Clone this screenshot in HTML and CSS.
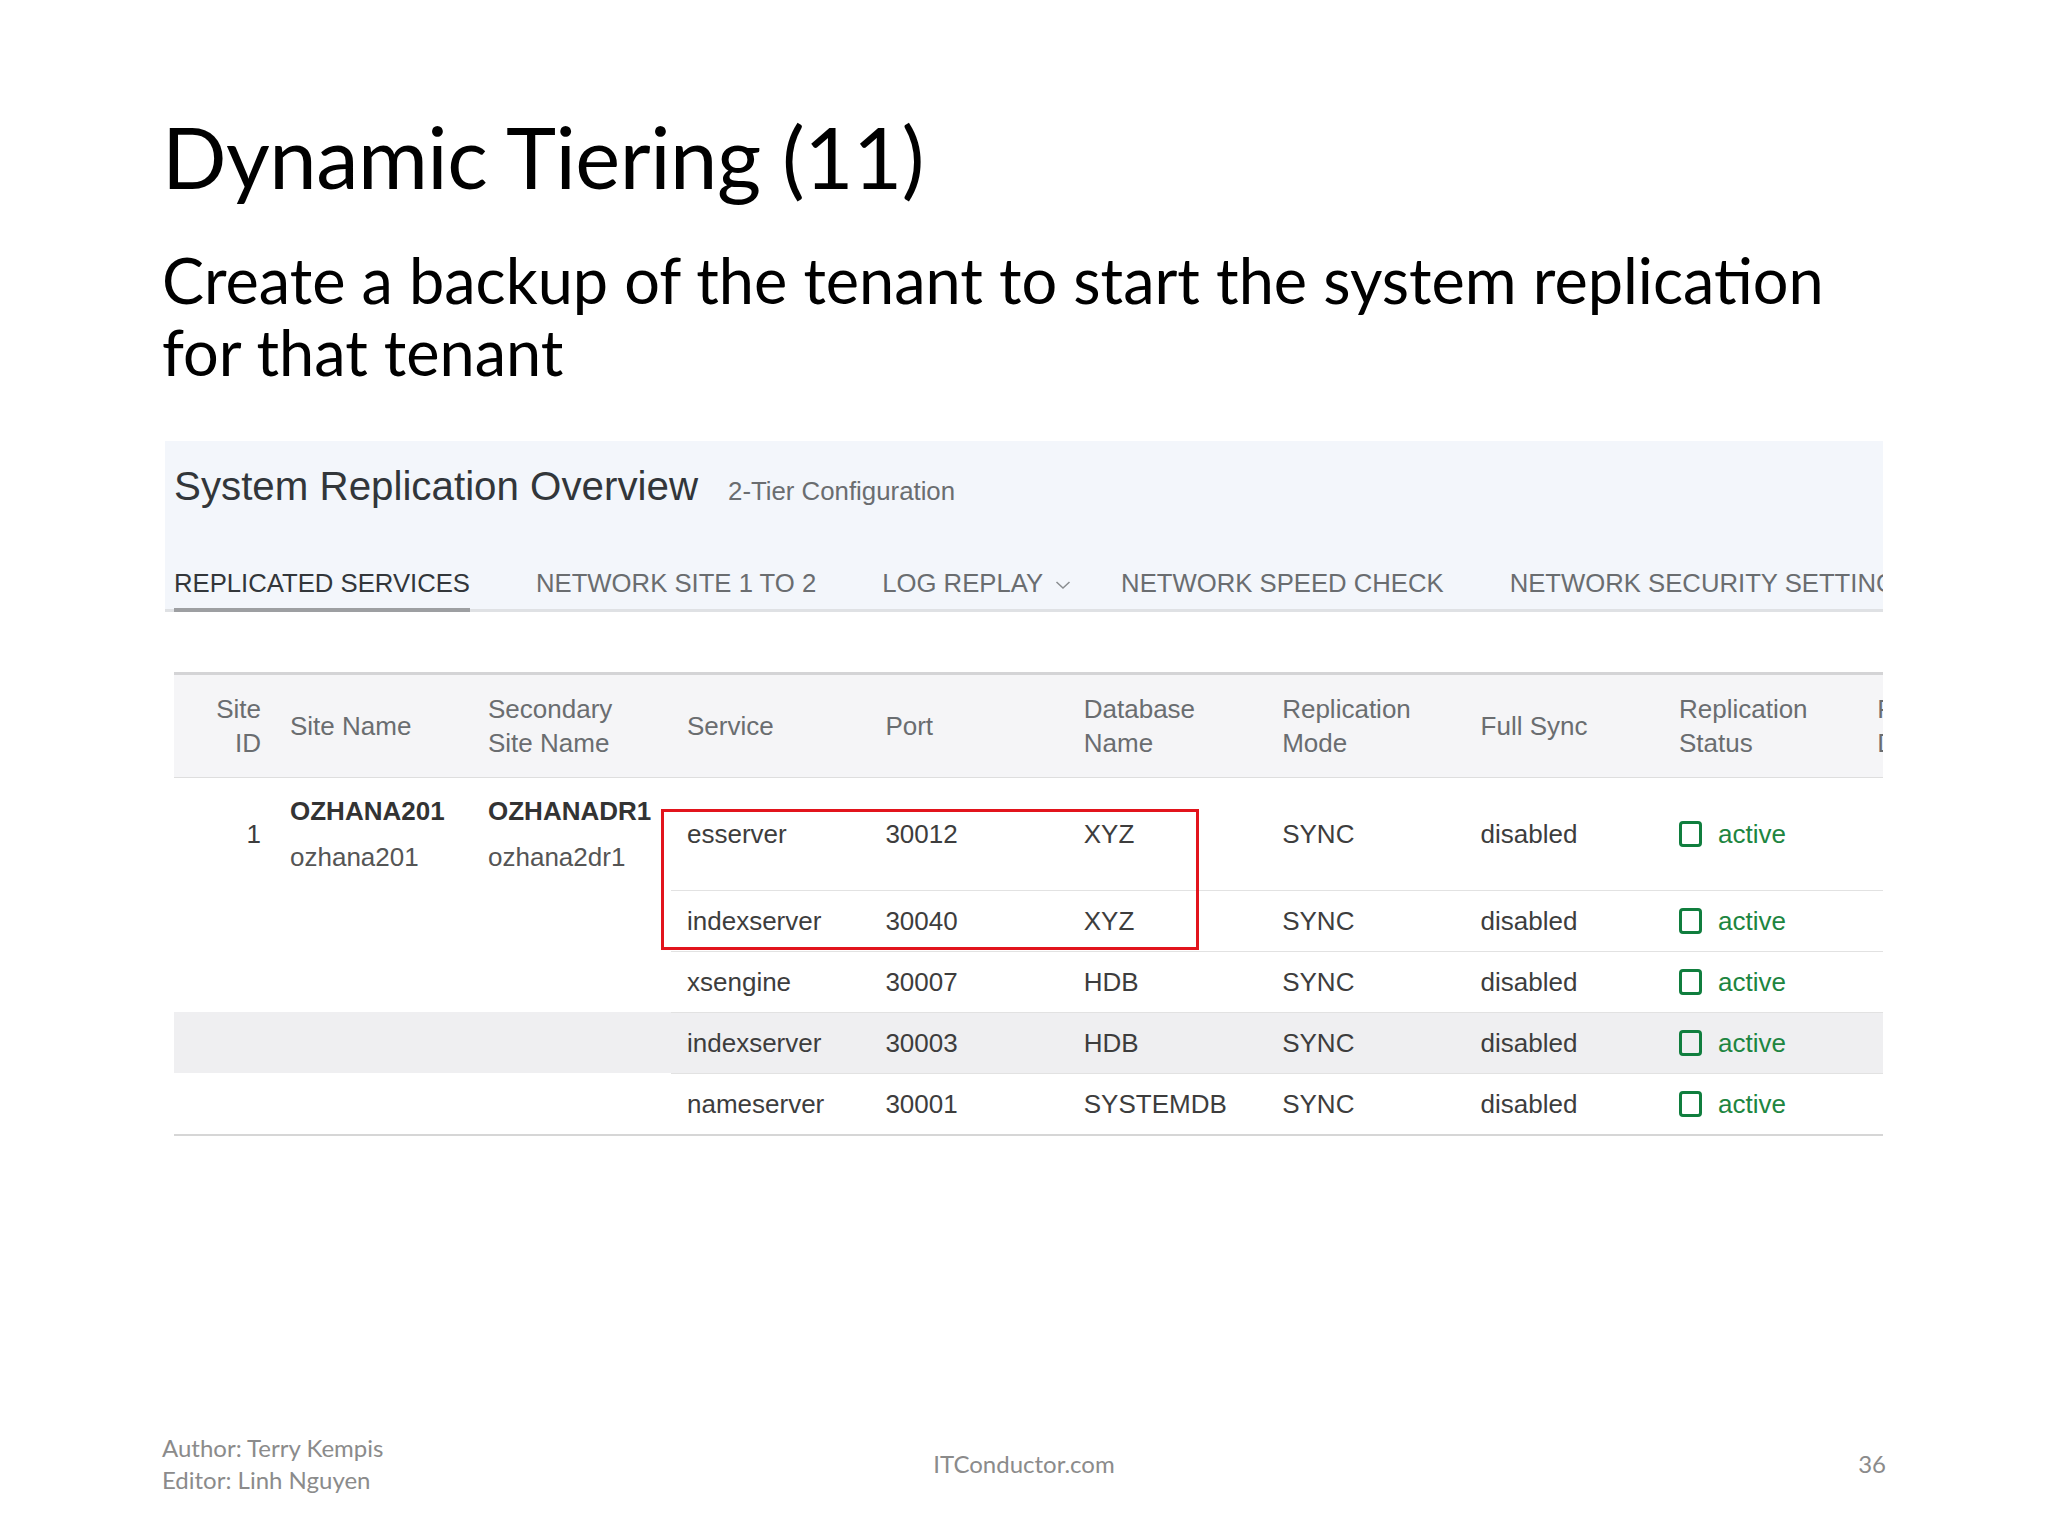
FILE: index.html
```html
<!DOCTYPE html>
<html lang="en">
<head>
  <meta charset="UTF-8">
  <meta name="viewport" content="width=device-width, initial-scale=1.0">
  <title>Dynamic Tiering (11)</title>
  <link rel="stylesheet" href="styles.css">
</head>
<body>
  <div class="slide">
    <h1 class="slide_title">Dynamic Tiering (11)</h1>
    <p class="slide_text">Create a backup of the tenant to start the system replication for that tenant</p>

    <div class="shot">
      <div class="shot_head">
        <div class="shot_title">
          <span class="shot_name">System Replication Overview</span>
          <span class="shot_sub">2-Tier Configuration</span>
        </div>
        <ul class="tabs">
          <li class="tab active">REPLICATED SERVICES</li>
          <li class="tab">NETWORK SITE 1 TO 2</li>
          <li class="tab tab_menu">LOG REPLAY
            <svg class="chev" width="16" height="10" viewBox="0 0 16 10"><path d="M1.5 2 L8 8 L14.5 2" fill="none" stroke="#8a8d90" stroke-width="1.5"/></svg>
          </li>
          <li class="tab">NETWORK SPEED CHECK</li>
          <li class="tab">NETWORK SECURITY SETTINGS</li>
        </ul>
      </div>

      <div class="table">
        <div class="tr th">
          <div class="td td_id">Site<br>ID</div>
          <div class="td">Site Name</div>
          <div class="td">Secondary<br>Site Name</div>
          <div class="svc">
            <div class="td">Service</div>
            <div class="td">Port</div>
            <div class="td">Database<br>Name</div>
            <div class="td">Replication<br>Mode</div>
            <div class="td">Full Sync</div>
            <div class="td">Replication<br>Status</div>
            <div class="td">Replay<br>Delay</div>
          </div>
        </div>

        <div class="tbody">
          <div class="tr tr_first">
            <div class="td td_id">1</div>
            <div class="td td_site"><b>OZHANA201</b><span>ozhana201</span></div>
            <div class="td td_site"><b>OZHANADR1</b><span>ozhana2dr1</span></div>
            <div class="svc">
              <div class="td">esserver</div>
              <div class="td">30012</div>
              <div class="td">XYZ</div>
              <div class="td">SYNC</div>
              <div class="td">disabled</div>
              <div class="td"><span class="status"><i class="status_box"></i>active</span></div>
              <div class="td"></div>
            </div>
          </div>
          <div class="tr">
            <div class="td td_id"></div>
            <div class="td"></div>
            <div class="td"></div>
            <div class="svc">
              <div class="td">indexserver</div>
              <div class="td">30040</div>
              <div class="td">XYZ</div>
              <div class="td">SYNC</div>
              <div class="td">disabled</div>
              <div class="td"><span class="status"><i class="status_box"></i>active</span></div>
              <div class="td"></div>
            </div>
          </div>
          <div class="tr">
            <div class="td td_id"></div>
            <div class="td"></div>
            <div class="td"></div>
            <div class="svc">
              <div class="td">xsengine</div>
              <div class="td">30007</div>
              <div class="td">HDB</div>
              <div class="td">SYNC</div>
              <div class="td">disabled</div>
              <div class="td"><span class="status"><i class="status_box"></i>active</span></div>
              <div class="td"></div>
            </div>
          </div>
          <div class="tr tr_hover">
            <div class="td td_id"></div>
            <div class="td"></div>
            <div class="td"></div>
            <div class="svc">
              <div class="td">indexserver</div>
              <div class="td">30003</div>
              <div class="td">HDB</div>
              <div class="td">SYNC</div>
              <div class="td">disabled</div>
              <div class="td"><span class="status"><i class="status_box"></i>active</span></div>
              <div class="td"></div>
            </div>
          </div>
          <div class="tr">
            <div class="td td_id"></div>
            <div class="td"></div>
            <div class="td"></div>
            <div class="svc">
              <div class="td">nameserver</div>
              <div class="td">30001</div>
              <div class="td">SYSTEMDB</div>
              <div class="td">SYNC</div>
              <div class="td">disabled</div>
              <div class="td"><span class="status"><i class="status_box"></i>active</span></div>
              <div class="td"></div>
            </div>
          </div>

          <!-- highlight drawn over the first two services -->
          <div class="mark"></div>
        </div>
      </div>
    </div>

    <footer class="slide_foot">
      <p class="foot_left">Author: Terry Kempis<br>Editor: Linh Nguyen</p>
      <p class="foot_mid">ITConductor.com</p>
      <p class="foot_right">36</p>
    </footer>
  </div>
</body>
</html>
```

FILE: styles.css
```css
*{margin:0;padding:0;box-sizing:border-box;}
html,body{width:100%;height:100%;background:#fff;}
body{font-family:"Lato","Open Sans",sans-serif;color:#000;}
ul{list-style:none;}

.slide{width:2048px;height:1536px;padding:0 162px 40px;display:flex;flex-direction:column;}
.slide_title{font-size:85px;font-weight:400;line-height:102px;margin-top:105px;letter-spacing:-0.5px;}
.slide_text{font-size:63px;line-height:72px;margin-top:37px;width:1700px;}

/* screenshot of the cockpit */
.shot{width:1718px;margin:53px 0 0 3px;font-family:"Liberation Sans",Arial,sans-serif;color:#333;}
.shot_head{background:#f3f6fb;padding-top:22px;}
.shot_title{display:flex;align-items:baseline;gap:30px;padding-left:9px;line-height:48px;}
.shot_name{font-size:40.3px;color:#32363a;}
.shot_sub{font-size:25.8px;color:#6a6d70;}
.tabs{display:flex;gap:66px;margin-top:53px;padding-left:9px;box-shadow:inset 0 -3px 0 #dfe1e4;white-space:nowrap;overflow:hidden;}
.tab{font-size:25.7px;line-height:30px;color:#6a6d70;padding-bottom:10px;border-bottom:4px solid transparent;display:flex;align-items:center;gap:12px;}
.tab.active{color:#32363a;border-bottom-color:#9d9fa2;}
.tab_menu{margin-right:-16px;}
.chev{margin-top:4px;}

.table{width:1709px;margin:60px 0 0 9px;overflow:hidden;font-size:26px;white-space:nowrap;border-bottom:2px solid #d6d6d6;}
.tr{display:grid;grid-template-columns:116px 198px 183px 1fr;}
.svc{display:grid;grid-template-columns:repeat(7,198.4px);padding-left:16px;}
.td{display:flex;flex-direction:column;justify-content:center;}
.td_id{text-align:right;align-items:flex-end;padding-right:29px;}

.th{height:106px;background:#f5f5f7;border-top:3px solid #d4d4d6;border-bottom:1px solid #dedede;color:#6a6d70;line-height:34px;}

.tbody{position:relative;color:#3d3d3d;}
.tbody .tr{height:61px;}
.tbody .tr:not(.tr_first) .svc{border-top:1px solid #e2e2e2;}
.tbody .tr.tr_first{height:112px;}
.tr_hover{background:#efeff1;}
.td_site{gap:12px;line-height:34px;}
.td_site b{color:#333;}
.td_site span{color:#555;}

.status{display:flex;align-items:center;gap:16px;color:#1d8540;}
.status_box{width:23px;height:26px;border:3px solid #107e3e;border-radius:4px;}

.mark{position:absolute;left:487px;top:31px;width:538px;height:141px;border:3px solid #e2141c;}

.slide_foot{margin-top:auto;display:grid;grid-template-columns:1fr auto 1fr;align-items:center;font-size:24px;line-height:32px;color:#8b8b8b;}
.foot_right{text-align:right;}
```
